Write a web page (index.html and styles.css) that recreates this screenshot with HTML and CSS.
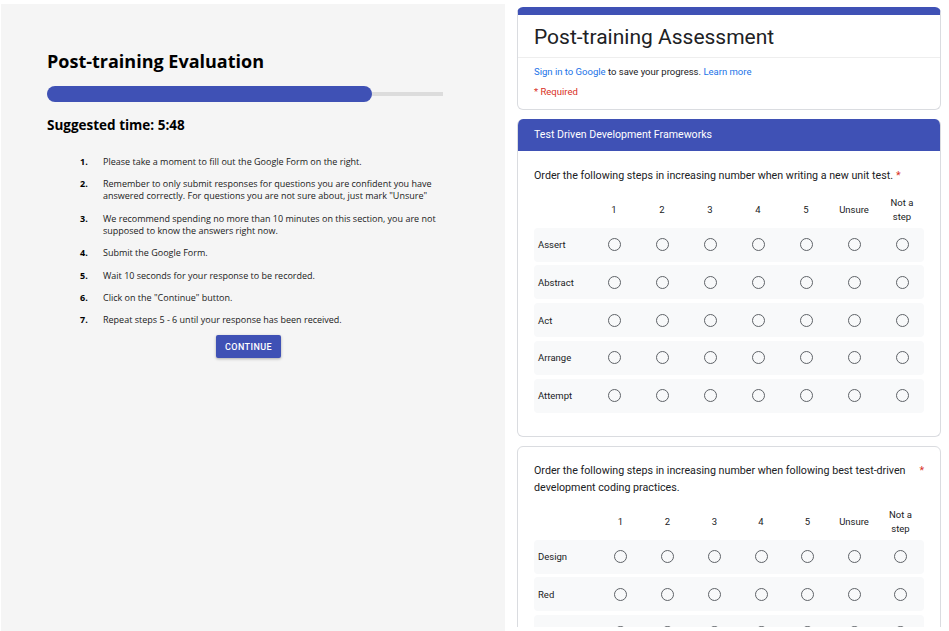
FILE: index.html
```html
<!DOCTYPE html>
<html>
<head>
<meta charset="utf-8">
<link rel="stylesheet" href="styles.css">
</head>
<body>
<div class="page">
  <section class="left">
    <h1 class="title">Post-training Evaluation</h1>
    <div class="progress"><div class="progress-fill" style="width:82%"></div></div>
    <h2 class="time">Suggested time: 5:48</h2>
    <ol class="steps">
      <li><span class="num">1.</span><span class="txt">Please take a moment to fill out the Google Form on the right.</span></li>
      <li><span class="num">2.</span><span class="txt">Remember to only submit responses for questions you are confident you have answered correctly. For questions you are not sure about, just mark "Unsure"</span></li>
      <li><span class="num">3.</span><span class="txt">We recommend spending no more than 10 minutes on this section, you are not supposed to know the answers right now.</span></li>
      <li><span class="num">4.</span><span class="txt">Submit the Google Form.</span></li>
      <li><span class="num">5.</span><span class="txt">Wait 10 seconds for your response to be recorded.</span></li>
      <li><span class="num">6.</span><span class="txt">Click on the "Continue" button.</span></li>
      <li><span class="num">7.</span><span class="txt">Repeat steps 5 - 6 until your response has been received.</span></li>
    </ol>
    <button class="continue">CONTINUE</button>
  </section>
  <section class="right">
    <div class="card head-card">
      <div class="form-title">Post-training Assessment</div>
      <div class="head-info">
        <p class="signin"><a class="link">Sign in to Google</a> to save your progress. <a class="link">Learn more</a></p>
        <p class="required">* Required</p>
      </div>
    </div>

    <div class="card section-card">
      <div class="section-head">Test Driven Development Frameworks</div>
      <div class="q-body first">
        <div class="q-text"><span class="q-label">Order the following steps in increasing number when writing a new unit test.</span><span class="star">*</span></div>
        <div class="grid g1">
          <div class="gh"></div><div class="gh"><span>1</span></div><div class="gh"><span>2</span></div><div class="gh"><span>3</span></div><div class="gh"><span>4</span></div><div class="gh"><span>5</span></div><div class="gh"><span>Unsure</span></div><div class="gh"><span>Not a step</span></div>
        </div>
        <div class="rows">
          <div class="row g1"><div class="lbl">Assert</div><i></i><i></i><i></i><i></i><i></i><i></i><i></i></div>
          <div class="row g1"><div class="lbl">Abstract</div><i></i><i></i><i></i><i></i><i></i><i></i><i></i></div>
          <div class="row g1"><div class="lbl">Act</div><i></i><i></i><i></i><i></i><i></i><i></i><i></i></div>
          <div class="row g1"><div class="lbl">Arrange</div><i></i><i></i><i></i><i></i><i></i><i></i><i></i></div>
          <div class="row g1"><div class="lbl">Attempt</div><i></i><i></i><i></i><i></i><i></i><i></i><i></i></div>
        </div>
      </div>
    </div>

    <div class="card q-card">
      <div class="q-body">
        <div class="q-text"><span class="q-label">Order the following steps in increasing number when following best test-driven development coding practices.</span><span class="star">*</span></div>
        <div class="grid g2">
          <div class="gh"></div><div class="gh"><span>1</span></div><div class="gh"><span>2</span></div><div class="gh"><span>3</span></div><div class="gh"><span>4</span></div><div class="gh"><span>5</span></div><div class="gh"><span>Unsure</span></div><div class="gh"><span>Not a step</span></div>
        </div>
        <div class="rows">
          <div class="row g2"><div class="lbl">Design</div><i></i><i></i><i></i><i></i><i></i><i></i><i></i></div>
          <div class="row g2"><div class="lbl">Red</div><i></i><i></i><i></i><i></i><i></i><i></i><i></i></div>
          <div class="row g2"><div class="lbl">Green</div><i></i><i></i><i></i><i></i><i></i><i></i><i></i></div>
          <div class="row g2"><div class="lbl">Refactor</div><i></i><i></i><i></i><i></i><i></i><i></i><i></i></div>
        </div>
      </div>
    </div>
  </section>
</div>
</body>
</html>
```

FILE: styles.css
```css
* { box-sizing: border-box; }
html, body { margin: 0; padding: 0; background: #ffffff; }
body { width: 949px; height: 631px; overflow: hidden; }

.page {
  display: flex;
  padding: 4px 0 0 1px;
  height: 631px;
}

.left {
  width: 504px;
  height: 627px;
  flex: none;
  background: #f5f5f5;
  padding: 45px 0 0 46px;
  font-family: "Open Sans", "Noto Sans", sans-serif;
  color: #000;
}
.title {
  margin: 0;
  font-size: 18px;
  font-weight: 700;
  line-height: 24px;
}
.progress {
  margin-top: 13px;
  width: 396px;
  height: 16px;
  display: flex;
  align-items: center;
  background: linear-gradient(#dcdcdc, #dcdcdc) no-repeat left center / 100% 4px;
}
.progress-fill {
  height: 16px;
  background: #3f51b5;
  border-radius: 8px;
}
.time {
  margin: 14px 0 0 0;
  font-size: 13.5px;
  font-weight: 700;
  line-height: 18px;
}
.steps {
  list-style: none;
  margin: 22px 0 0 33px;
  padding: 0;
  width: 362px;
  display: flex;
  flex-direction: column;
  gap: 10.4px;
  font-size: 9px;
  line-height: 12px;
  color: #1a1a1a;
}
.steps li { display: flex; }
.num { width: 23px; flex: none; font-weight: 700; color: #000; }
.txt { flex: 1; }
.continue {
  display: block;
  margin: 9px 0 0 169px;
  width: 65px;
  height: 23px;
  border: none;
  border-radius: 2px;
  background: #3f51b5;
  color: #fff;
  font-family: Roboto, sans-serif;
  font-weight: 500;
  font-size: 9px;
  letter-spacing: 0.4px;
  padding: 0;
  box-shadow: 0 1px 3px rgba(0,0,0,0.3);
}

.right {
  width: 444px;
  height: 623px;
  overflow: hidden;
  padding: 3px 0 0 12px;
  font-family: Roboto, "Liberation Sans", sans-serif;
  color: #202124;
  display: flex;
  flex-direction: column;
  gap: 9px;
}
.card {
  width: 424px;
  flex: none;
  background: #fff;
  border: 1px solid #dadce0;
  border-radius: 6px;
  overflow: hidden;
}
.head-card {
  border-top: 8px solid #3f51b5;
}
.form-title {
  font-size: 21px;
  line-height: 28px;
  padding: 8px 16px 6px 16px;
  border-bottom: 1px solid #eeeeee;
}
.head-info { padding: 7px 16px 10px 16px; }
.signin { margin: 0; font-size: 9.5px; line-height: 14px; color: #202124; }
.link { color: #1a73e8; }
.required { margin: 6px 0 0 0; font-size: 9.5px; line-height: 14px; color: #d93025; }

.section-card { border-top: none; }
.section-head {
  background: #3f51b5;
  color: #fff;
  font-size: 10.6px;
  line-height: 32px;
  padding: 0 16px;
}
.q-body { padding: 15px 16px 23px 16px; }
.q-body.first { padding-top: 15.5px; }
.q-text {
  display: flex;
  gap: 3px;
  font-size: 10.7px;
  line-height: 17px;
  color: #202124;
}
.q-card .q-text { gap: 8px; }
.q-label { flex: 0 1 auto; }
.star { color: #d93025; flex: none; }

.grid {
  display: grid;
  margin-top: 12px;
  align-items: center;
}
.g1 { grid-template-columns: 56px 48px 48px 48px 48px 48px 48px 48px; }
.g2 { grid-template-columns: 63px 47px 47px 47px 46px 47px 46px 47px; }
.gh {
  font-size: 9.5px;
  line-height: 14px;
  color: #202124;
  height: 28px;
  display: flex;
  align-items: center;
  justify-content: center;
}
.gh span { display: block; max-width: 34px; text-align: center; color: #202124; }
.rows { display: flex; flex-direction: column; gap: 3.8px; margin-top: 4px; }
.row {
  height: 34px;
  background: #f8f9fa;
  border-radius: 4px;
  display: grid;
  align-items: center;
  justify-items: center;
}
.lbl {
  justify-self: start;
  padding-left: 4px;
  font-size: 9.5px;
}
.row i {
  display: block;
  width: 13px;
  height: 13px;
  border: 1.4px solid #5f6368;
  border-radius: 50%;
}
```
